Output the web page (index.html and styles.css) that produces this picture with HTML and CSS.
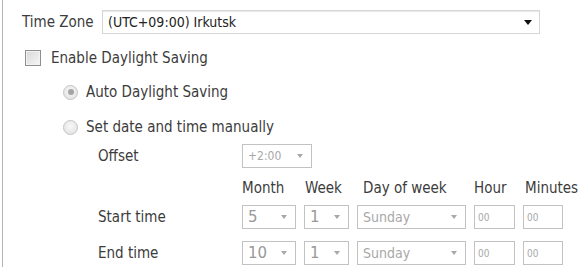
FILE: index.html
```html
<!DOCTYPE html>
<html>
<head>
<meta charset="utf-8">
<link rel="stylesheet" href="styles.css">
</head>
<body>
<div class="panel">
  <div class="row tz-row">
    <span class="tz-label">Time Zone</span>
    <div class="tz-select">
      <span class="tz-value">(UTC+09:00) Irkutsk</span>
      <span class="tz-arrow"></span>
    </div>
  </div>
  <div class="row check-row">
    <span class="checkbox"></span>
    <span class="label">Enable Daylight Saving</span>
  </div>
  <div class="row radio-row auto-row">
    <span class="radio checked"></span>
    <span class="label">Auto Daylight Saving</span>
  </div>
  <div class="row radio-row manual-row">
    <span class="radio"></span>
    <span class="label">Set date and time manually</span>
  </div>
  <div class="dst-grid">
    <span class="label row-label">Offset</span>
    <div class="sel offset-sel"><span class="val small">+2:00</span><span class="arrow"></span></div>

    <span class="label head h-month">Month</span>
    <span class="label head h-week">Week</span>
    <span class="label head h-day">Day of week</span>
    <span class="label head h-hour">Hour</span>
    <span class="label head h-min">Minutes</span>

    <span class="label row-label r1">Start time</span>
    <div class="sel r1 c-month"><span class="val big">5</span><span class="arrow"></span></div>
    <div class="sel r1 c-week"><span class="val big">1</span><span class="arrow"></span></div>
    <div class="sel r1 c-day"><span class="val day">Sunday</span><span class="arrow"></span></div>
    <div class="inp r1 c-hour">00</div>
    <div class="inp r1 c-min">00</div>

    <span class="label row-label r2">End time</span>
    <div class="sel r2 c-month"><span class="val big">10</span><span class="arrow"></span></div>
    <div class="sel r2 c-week"><span class="val big">1</span><span class="arrow"></span></div>
    <div class="sel r2 c-day"><span class="val day">Sunday</span><span class="arrow"></span></div>
    <div class="inp r2 c-hour">00</div>
    <div class="inp r2 c-min">00</div>
  </div>
</div>
</body>
</html>
```
FILE: styles.css
```css
html, body {
  margin: 0;
  padding: 0;
  background: #fff;
}
body {
  font-family: "DejaVu Sans Condensed", "DejaVu Sans", sans-serif;
  font-size: 15px;
  color: #3c3c3c;
  width: 581px;
  height: 267px;
  overflow: hidden;
}
.panel {
  margin-left: 2px;
  border-left: 1px solid #b4b4b4;
  height: 267px;
  padding-top: 10px;
  padding-left: 19px;
  box-sizing: border-box;
}
.row {
  display: flex;
  align-items: center;
}
.tz-row {
  height: 24px;
}
.tz-label {
  width: 80px;
  flex: none;
}
.tz-select {
  width: 438px;
  height: 24px;
  box-sizing: border-box;
  border: 1px solid #d6d6d6;
  box-shadow: inset 0 1px 1px #e8e8e8;
  display: flex;
  align-items: center;
  justify-content: space-between;
  padding: 0 7px 0 5px;
}
.tz-value {
  font-size: 14px;
  color: #222;
}
.tz-arrow {
  width: 0;
  height: 0;
  border-left: 4px solid transparent;
  border-right: 4px solid transparent;
  border-top: 5px solid #111;
}
.check-row {
  margin-top: 11px;
  height: 26px;
  padding-left: 3px;
}
.checkbox {
  width: 16px;
  height: 16px;
  box-sizing: border-box;
  border: 1px solid #8f8f8f;
  background: linear-gradient(135deg, #d8d8d8, #f6f6f6);
  box-shadow: inset 0 0 0 1px #f2f2f2;
  margin-right: 10px;
  flex: none;
}
.radio-row {
  height: 26px;
  padding-left: 41px;
}
.auto-row {
  margin-top: 8px;
}
.manual-row {
  margin-top: 9px;
}
.radio {
  width: 15px;
  height: 15px;
  box-sizing: border-box;
  border-radius: 50%;
  border: 1px solid #c4c4c4;
  background: radial-gradient(circle at 50% 40%, #f8f8f8, #dedede);
  margin-right: 8px;
  flex: none;
  position: relative;
}
.radio.checked::after {
  content: "";
  position: absolute;
  left: 3.5px;
  top: 3.5px;
  width: 6px;
  height: 6px;
  border-radius: 50%;
  background: #a4a4a4;
}
.dst-grid {
  margin-top: 4px;
  margin-left: 76px;
  display: grid;
  grid-template-columns: 136px 54px 45px 109px 41px 40px;
  column-gap: 8px;
  grid-template-rows: 32px 29px 36px 24px;
  align-items: start;
}
.row-label {
  grid-column: 1;
  line-height: 24px;
}
.head {
  grid-row: 2;
  line-height: 22px;
  margin-top: 1px;
}
.h-month { grid-column: 2; }
.h-week { grid-column: 3; margin-left: 1px; }
.h-day { grid-column: 4; margin-left: 6px; white-space: nowrap; }
.h-hour { grid-column: 5; }
.h-min { grid-column: 6; margin-left: 2px; white-space: nowrap; }
.r1 { grid-row: 3; }
.r2 { grid-row: 4; }
.c-month { grid-column: 2; }
.c-week { grid-column: 3; }
.c-day { grid-column: 4; }
.c-hour { grid-column: 5; }
.c-min { grid-column: 6; }
.sel, .inp {
  height: 24px;
  box-sizing: border-box;
  border: 1px solid #c2c2c2;
  background: #fff;
  display: flex;
  align-items: center;
}
.sel {
  justify-content: space-between;
  padding: 0 8px 0 5px;
}
.offset-sel {
  grid-column: 2;
  grid-row: 1;
  width: 70px;
}
.val {
  color: #a0a0a0;
}
.val.big {
  font-family: "DejaVu Sans", sans-serif;
  font-size: 15px;
  color: #999;
}
.val.small {
  font-size: 12px;
  color: #a8a8a8;
}
.val.day {
  font-size: 14px;
  color: #a8a8a8;
}
.arrow {
  width: 0;
  height: 0;
  border-left: 3px solid transparent;
  border-right: 3px solid transparent;
  border-top: 4px solid #a8a8a8;
}
.inp {
  font-size: 10px;
  color: #a8a8a8;
  padding-left: 3px;
}
```
